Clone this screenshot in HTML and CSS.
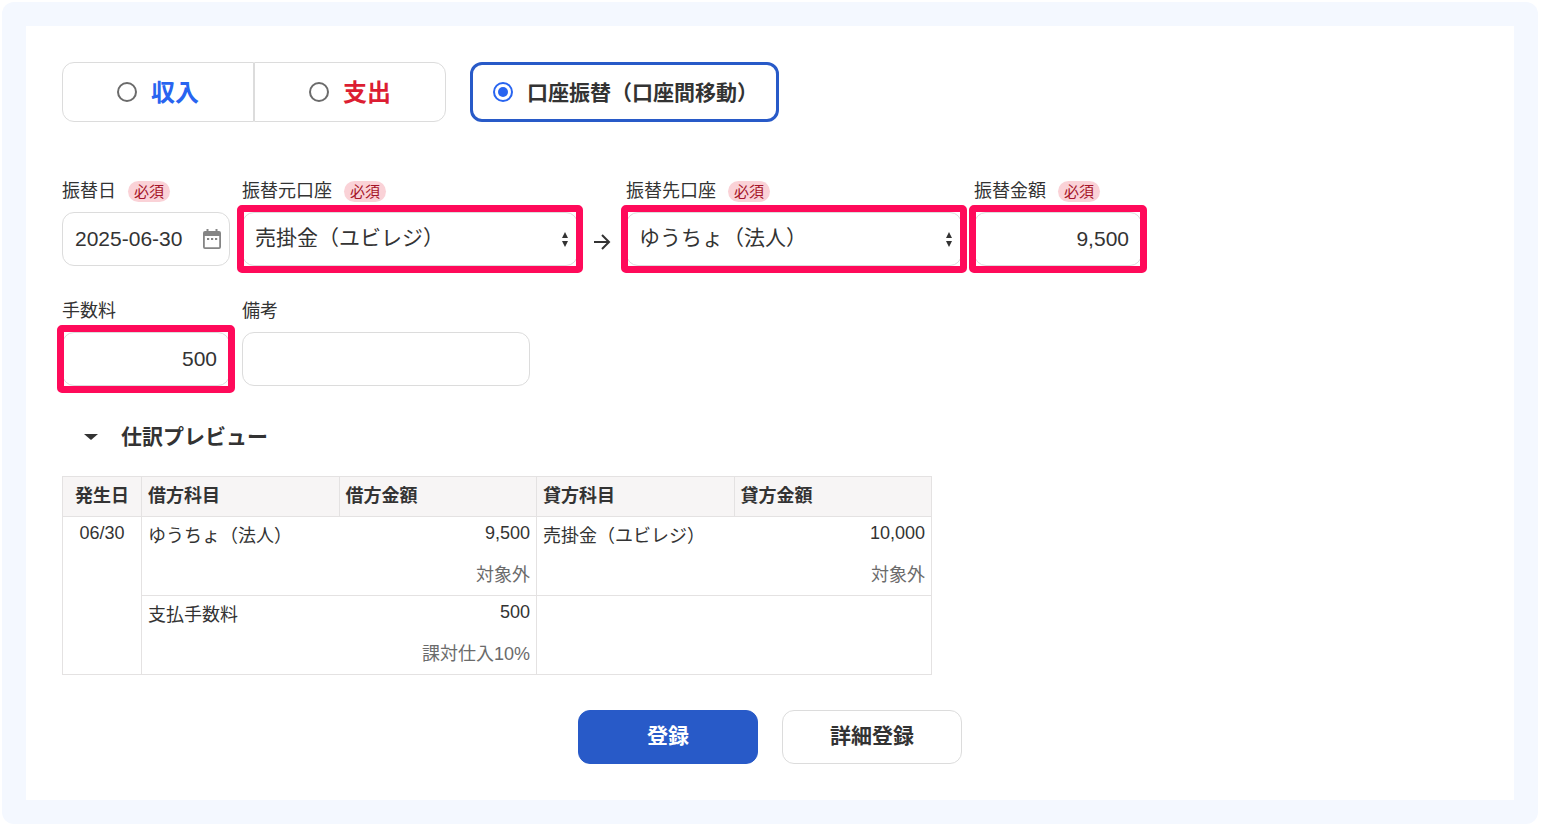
FILE: index.html
```html
<!DOCTYPE html>
<html lang="ja">
<head>
    <meta charset="UTF-8">
    <title>かんたん取引入力</title>
    <link rel="stylesheet" href="styles.css">
</head>
<body>
    <div class="frame">
        <form class="panel">
            <div class="types">
                <div class="type-group">
                    <label class="type type-income"><input type="radio" name="type">収入</label>
                    <label class="type type-expense"><input type="radio" name="type">支出</label>
                </div>
                <label class="type type-transfer"><input type="radio" name="type" checked>口座振替（口座間移動）</label>
            </div>

            <div class="row">
                <div class="field">
                    <div class="field-label"><label for="date">振替日</label><span class="required">必須</span></div>
                    <div class="control">
                        <input type="text" id="date" value="2025-06-30">
                        <button type="button" class="calendar" aria-label="カレンダー">
                            <svg width="18" height="20" viewBox="0 0 18 20">
                                <path fill="#858585" fill-rule="evenodd" d="M3.5 0h2v2h7V0h2v2H16a2 2 0 0 1 2 2v14a2 2 0 0 1-2 2H2a2 2 0 0 1-2-2V4a2 2 0 0 1 2-2h1.500zM1.800 7v11.200h14.400V7zM4 9h2.200v2H4zM8 9h2.200v2H8zM12 9h2.200v2H12z"/>
                            </svg>
                        </button>
                    </div>
                </div>
                <div class="field field-account">
                    <div class="field-label"><label for="from">振替元口座</label><span class="required">必須</span></div>
                    <div class="control highlight">
                        <select id="from"><option>売掛金（ユビレジ）</option></select>
                        <svg class="updown" width="6" height="16" viewBox="0 0 6 16"><path fill="#333" d="M3 0l3 6H0zM0 9h6l-3 6z"/></svg>
                    </div>
                </div>
                <div class="arrow">
                    <svg width="24" height="24" viewBox="0 0 24 24"><path fill="none" stroke="#333" stroke-width="2" d="M4 12h15M12 5l7 7-7 7"/></svg>
                </div>
                <div class="field field-account">
                    <div class="field-label"><label for="to">振替先口座</label><span class="required">必須</span></div>
                    <div class="control highlight">
                        <select id="to"><option>ゆうちょ（法人）</option></select>
                        <svg class="updown" width="6" height="16" viewBox="0 0 6 16"><path fill="#333" d="M3 0l3 6H0zM0 9h6l-3 6z"/></svg>
                    </div>
                </div>
                <div class="field">
                    <div class="field-label"><label for="amount">振替金額</label><span class="required">必須</span></div>
                    <div class="control highlight"><input type="text" id="amount" class="number" value="9,500"></div>
                </div>
            </div>

            <div class="row">
                <div class="field">
                    <div class="field-label"><label for="fee">手数料</label></div>
                    <div class="control highlight"><input type="text" id="fee" class="number" value="500"></div>
                </div>
                <div class="field field-memo">
                    <div class="field-label"><label for="memo">備考</label></div>
                    <div class="control"><input type="text" id="memo"></div>
                </div>
            </div>

            <details class="preview" open>
                <summary>
                    <svg width="14" height="6" viewBox="0 0 14 6"><path fill="#333" d="M0 0h14L7 6z"/></svg>
                    仕訳プレビュー
                </summary>
                <table>
                    <thead>
                        <tr>
                            <th class="col-date">発生日</th>
                            <th>借方科目</th>
                            <th>借方金額</th>
                            <th>貸方科目</th>
                            <th>貸方金額</th>
                        </tr>
                    </thead>
                    <tbody>
                        <tr>
                            <td class="col-date" rowspan="2">06/30</td>
                            <td class="item">ゆうちょ（法人）</td>
                            <td class="money">9,500<div class="tax">対象外</div></td>
                            <td class="item">売掛金（ユビレジ）</td>
                            <td class="money">10,000<div class="tax">対象外</div></td>
                        </tr>
                        <tr>
                            <td class="item">支払手数料</td>
                            <td class="money">500<div class="tax">課対仕入10%</div></td>
                            <td class="item"></td>
                            <td class="money"></td>
                        </tr>
                    </tbody>
                </table>
            </details>

            <div class="actions">
                <button type="button" class="btn btn-primary">登録</button>
                <button type="button" class="btn">詳細登録</button>
            </div>
        </form>
    </div>
</body>
</html>
```
FILE: styles.css
```css
* {
    box-sizing: border-box;
}
body {
    margin: 2px 6px 3px 2px;
    background: #fff;
    color: #333;
    font-family: "Liberation Sans", "Noto Sans CJK JP", sans-serif;
    font-size: 18px;
    line-height: 27px;
}
input, select, button {
    margin: 0;
    color: inherit;
    font: inherit;
}
.frame {
    padding: 24px;
    background: #f4f8ff;
    border-radius: 12px;
}
.panel {
    padding: 36px;
    background: #fff;
}

/* 取引の種類 */
.types {
    display: flex;
    gap: 24px;
    margin-bottom: 56px;
}
.type-group {
    display: flex;
}
.type {
    display: flex;
    align-items: center;
    justify-content: center;
    gap: 14px;
    height: 60px;
    border: 1px solid #dcdcdc;
    border-radius: 12px;
    font-weight: bold;
}
.type input {
    appearance: none;
    width: 20px;
    height: 20px;
    border: 2px solid #6b6b6b;
    border-radius: 50%;
}
.type input:checked {
    border-color: #2864f0;
    background: #2864f0;
    background-clip: content-box;
    padding: 3px;
}
.type-income, .type-expense {
    width: 192px;
    font-size: 24px;
}
.type-income {
    color: #2864f0;
    border-radius: 12px 0 0 12px;
}
.type-expense {
    color: #dc1e32;
    border-radius: 0 12px 12px 0;
}
.type-transfer {
    padding: 0 18px 0 20px;
    border: 3px solid #285ac8;
    font-size: 21px;
}

/* 入力欄 */
.row {
    display: flex;
    align-items: flex-end;
    gap: 12px;
    margin-bottom: 32px;
}
.field {
    width: 168px;
}
.field-account {
    width: 336px;
}
.field-memo {
    width: 288px;
}
.field-label {
    display: flex;
    align-items: center;
    gap: 12px;
    margin-bottom: 7px;
}
.required {
    padding: 0 6px;
    border-radius: 12px;
    background: #fad2d7;
    color: #a51428;
    font-size: 15px;
    line-height: 21px;
}
.control {
    position: relative;
}
.control input, .control select {
    display: block;
    appearance: none;
    width: 100%;
    height: 54px;
    padding: 0 12px;
    border: 1px solid #dcdcdc;
    border-radius: 12px;
    background: #fff;
    font-size: 21px;
}
.control select {
    padding-bottom: 3px;
}
.control .number {
    text-align: right;
}
.calendar {
    position: absolute;
    top: 0;
    right: 6px;
    display: flex;
    align-items: center;
    justify-content: center;
    width: 24px;
    height: 54px;
    padding: 0;
    border: none;
    background: none;
}
.updown {
    position: absolute;
    top: 20px;
    right: 10px;
}
.highlight::after {
    content: "";
    position: absolute;
    inset: -7px -5px;
    border: 7px solid #ff0a5a;
    border-radius: 5px;
    pointer-events: none;
}
.arrow {
    display: flex;
    align-items: center;
    height: 48px;
}

/* 仕訳プレビュー */
.preview {
    margin-top: 37px;
}
.preview summary {
    display: flex;
    align-items: center;
    gap: 23px;
    margin-bottom: 26px;
    padding-left: 22px;
    font-size: 21px;
    font-weight: bold;
}
.preview table {
    width: 100%;
    max-width: 870px;
    border-collapse: collapse;
    table-layout: fixed;
}
th, td {
    padding: 6px;
    border: 1px solid #e4e2e2;
    text-align: left;
    vertical-align: top;
}
th {
    height: 40px;
    background: #f7f5f5;
}
.col-date {
    width: 79px;
    text-align: center;
}
td.col-date, .money {
    line-height: 21px;
}
.item {
    border-right: none;
}
.money {
    border-left: none;
    text-align: right;
}
.tax {
    margin-top: 18px;
    color: #6b6b6b;
    line-height: 27px;
}

.actions {
    display: flex;
    justify-content: center;
    gap: 24px;
    margin-top: 35px;
}
.btn {
    width: 180px;
    height: 54px;
    padding: 0 0 3px;
    border: 1px solid #dcdcdc;
    border-radius: 12px;
    background: #fff;
    font-size: 21px;
    font-weight: bold;
    cursor: pointer;
}
.btn-primary {
    border-color: #285ac8;
    background: #285ac8;
    color: #fff;
}
```
